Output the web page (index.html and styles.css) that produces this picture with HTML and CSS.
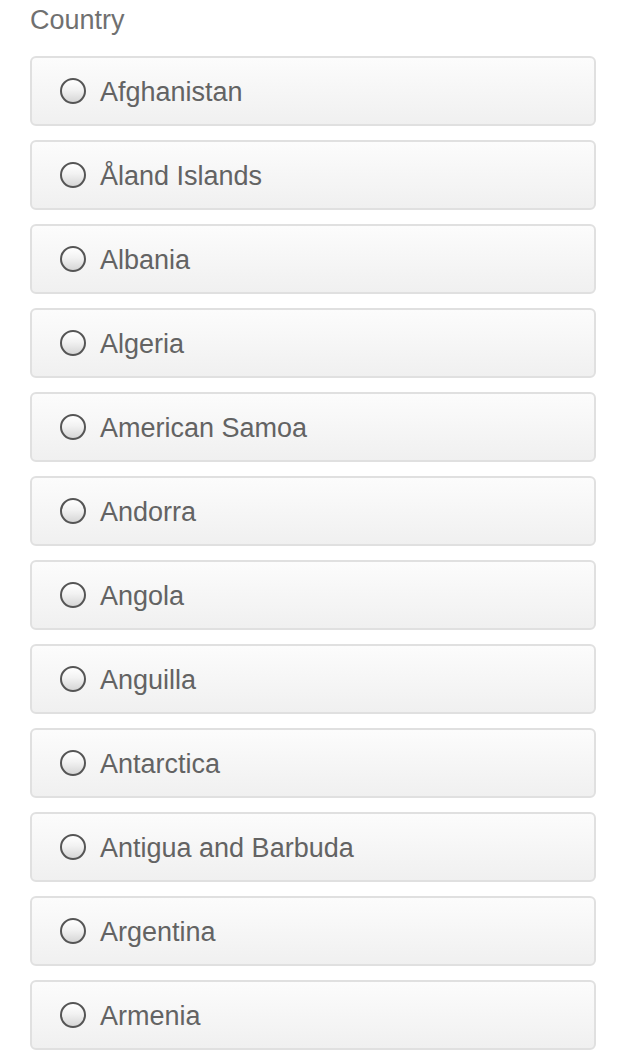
FILE: index.html
```html
<!DOCTYPE html>
<html>
<head>
<meta charset="utf-8">
<link rel="stylesheet" href="styles.css">
</head>
<body>
<div class="field">
  <div class="label">Country</div>
  <div class="list">
    <label class="opt"><span class="radio"></span><span class="txt">Afghanistan</span></label>
    <label class="opt"><span class="radio"></span><span class="txt">Åland Islands</span></label>
    <label class="opt"><span class="radio"></span><span class="txt">Albania</span></label>
    <label class="opt"><span class="radio"></span><span class="txt">Algeria</span></label>
    <label class="opt"><span class="radio"></span><span class="txt">American Samoa</span></label>
    <label class="opt"><span class="radio"></span><span class="txt">Andorra</span></label>
    <label class="opt"><span class="radio"></span><span class="txt">Angola</span></label>
    <label class="opt"><span class="radio"></span><span class="txt">Anguilla</span></label>
    <label class="opt"><span class="radio"></span><span class="txt">Antarctica</span></label>
    <label class="opt"><span class="radio"></span><span class="txt">Antigua and Barbuda</span></label>
    <label class="opt"><span class="radio"></span><span class="txt">Argentina</span></label>
    <label class="opt"><span class="radio"></span><span class="txt">Armenia</span></label>
  </div>
</div>
</body>
</html>
```
FILE: styles.css
```css
html, body {
  margin: 0;
  padding: 0;
  background: #ffffff;
}
body {
  font-family: "Liberation Sans", Arial, sans-serif;
  overflow: hidden;
}
.field {
  padding: 0 44px 0 30px;
}
.label {
  font-size: 27px;
  line-height: 34px;
  padding-top: 3px;
  color: #707070;
  margin-bottom: 19px;
}
.list {
  display: flex;
  flex-direction: column;
  gap: 14px;
}
.opt {
  display: flex;
  align-items: center;
  box-sizing: border-box;
  height: 70px;
  border: 2px solid #e0e0e0;
  border-radius: 6px;
  background: linear-gradient(to bottom, #fcfcfc 0%, #f0f0f0 100%);
  padding-left: 28px;
}
.radio {
  box-sizing: border-box;
  width: 26px;
  height: 26px;
  border-radius: 50%;
  border: 2px solid #555555;
  background: linear-gradient(to bottom, #ffffff 0%, #f2f2f2 45%, #d6d6d6 100%);
  flex: none;
}
.txt {
  margin-left: 14px;
  margin-top: 2px;
  font-size: 27px;
  line-height: 27px;
  color: #636363;
}
```
